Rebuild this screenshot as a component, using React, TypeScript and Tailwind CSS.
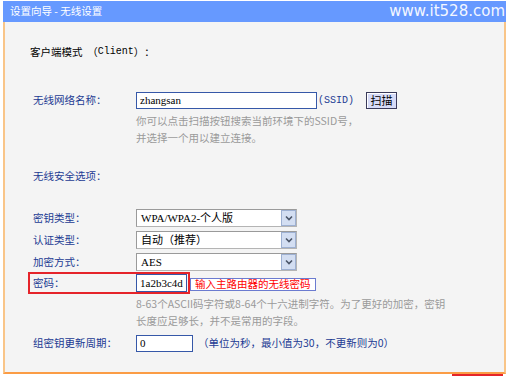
import React from "react";

function Chevron() {
  return (
    <svg width="8" height="6" viewBox="0 0 8 6">
      <path d="M1 1.5 L4 4.5 L7 1.5" fill="none" stroke="#4a5568" strokeWidth="1.6" />
    </svg>
  );
}

function Select({ value }: { value: string }) {
  return (
    <div className="w-[161px] h-[18px] flex bg-white border border-[#b4b4b4] border-t-[#9a9a9a] border-l-[#9a9a9a]">
      <div className="flex-1 flex items-center pl-[4px] text-black font-['Liberation_Serif','Noto_Sans_CJK_SC',serif] text-[11px]">
        {value}
      </div>
      <div className="w-[15px] h-full flex items-center justify-center bg-[#d3def2] border border-[#9db0d2]">
        <Chevron />
      </div>
    </div>
  );
}

export default function App() {
  const label = "text-[#1c3b93]";
  return (
    <div className="w-[510px] h-[376px] bg-white overflow-hidden font-['Noto_Sans_CJK_SC',sans-serif] text-[10.5px] leading-none [text-spacing-trim:space-all]">
      <div className="ml-[3px] mt-[1px] w-[503px]">
        <div className="h-[21px] bg-[#6699ff] flex items-center justify-between pl-[7px] pr-[1px] text-white">
          <span className="text-[10.5px]">设置向导&nbsp;-&nbsp;无线设置</span>
          <span className="font-['DejaVu_Sans',sans-serif] text-[15px] text-[#f4f7ff]">www.it528.com</span>
        </div>
        <div className="h-[352px] bg-[#f4f4f4] border-l-2 border-r-2 border-b-2 border-l-[#f9c588] border-r-[#f9c588] border-b-[#fb9c45] flex flex-col">
          <div className="mt-[22px] h-[16px] flex items-center pl-[25px] text-black">
            客户端模式&nbsp;&nbsp;（<span className="font-['Liberation_Mono',monospace] text-[10px]">Client</span>）：
          </div>

          <div className="mt-[32px] h-[17px] flex items-center">
            <div className={`w-[131px] pl-[28px] ${label}`}>无线网络名称：</div>
            <div className="w-[181px] h-[17px] bg-white border border-[#3658a8] flex items-center pl-[3px] font-['Liberation_Serif',serif] text-[11px] text-black">
              zhangsan
            </div>
            <div className={`w-[49px] pl-[1px] font-['Liberation_Mono',monospace] text-[10px] ${label}`}>(SSID)</div>
            <div className="w-[31px] h-[17px] flex items-center justify-center bg-[#d7dbf7] border border-[#3a3a5a] shadow-[inset_1px_1px_0_#ffffff] text-black text-[11px]">
              扫描
            </div>
          </div>

          <div className="mt-[3px] ml-[131px] text-[#9a9a9a] leading-[17px]">
            <div>你可以点击扫描按钮搜索当前环境下的SSID号，</div>
            <div>并选择一个用以建立连接。</div>
          </div>

          <div className={`mt-[22px] h-[16px] flex items-center pl-[28px] ${label}`}>无线安全选项：</div>

          <div className="mt-[25px] flex flex-col gap-[4px]">
            <div className="flex items-center h-[18px]">
              <div className={`w-[131px] pl-[28px] ${label}`}>密钥类型：</div>
              <Select value="WPA/WPA2-个人版" />
            </div>
            <div className="flex items-center h-[18px]">
              <div className={`w-[131px] pl-[28px] ${label}`}>认证类型：</div>
              <Select value="自动（推荐）" />
            </div>
            <div className="flex items-center h-[18px]">
              <div className={`w-[131px] pl-[28px] ${label}`}>加密方式：</div>
              <Select value="AES" />
            </div>
          </div>

          <div className="mt-[1px] flex items-center">
            <div className="ml-[23px] w-[162px] h-[22px] border-2 border-[#e5242a] flex items-center">
              <div className={`w-[106px] pl-[3px] ${label}`}>密码：</div>
              <div className="w-[51px] h-[18px] bg-white border border-[#3658a8] flex items-center pl-[3px] font-['Liberation_Serif',serif] text-[11px] text-black">
                1a2b3c4d
              </div>
            </div>
            <div className="mt-[3px] w-[126px] h-[13px] bg-white border border-[#6b7bd0] flex items-center pl-[4px] text-[#ff0000]">
              输入主路由器的无线密码
            </div>
          </div>

          <div className="mt-[1px] ml-[131px] text-[#9a9a9a] leading-[17px]">
            <div>8-63个ASCII码字符或8-64个十六进制字符。为了更好的加密，密钥</div>
            <div>长度应足够长，并不是常用的字段。</div>
          </div>

          <div className="mt-[6px] h-[17px] flex items-center">
            <div className={`w-[131px] pl-[28px] ${label}`}>组密钥更新周期：</div>
            <div className="w-[57px] h-[17px] bg-white border border-[#3658a8] flex items-center pl-[3px] font-['Liberation_Serif',serif] text-[11px] text-black">
              0
            </div>
            <div className={`ml-[5px] ${label}`}>（单位为秒，最小值为30，不更新则为0）</div>
          </div>
        </div>
        <div className="ml-[449px] w-[51px] h-[2px] bg-[#e5242a]" />
      </div>
    </div>
  );
}
